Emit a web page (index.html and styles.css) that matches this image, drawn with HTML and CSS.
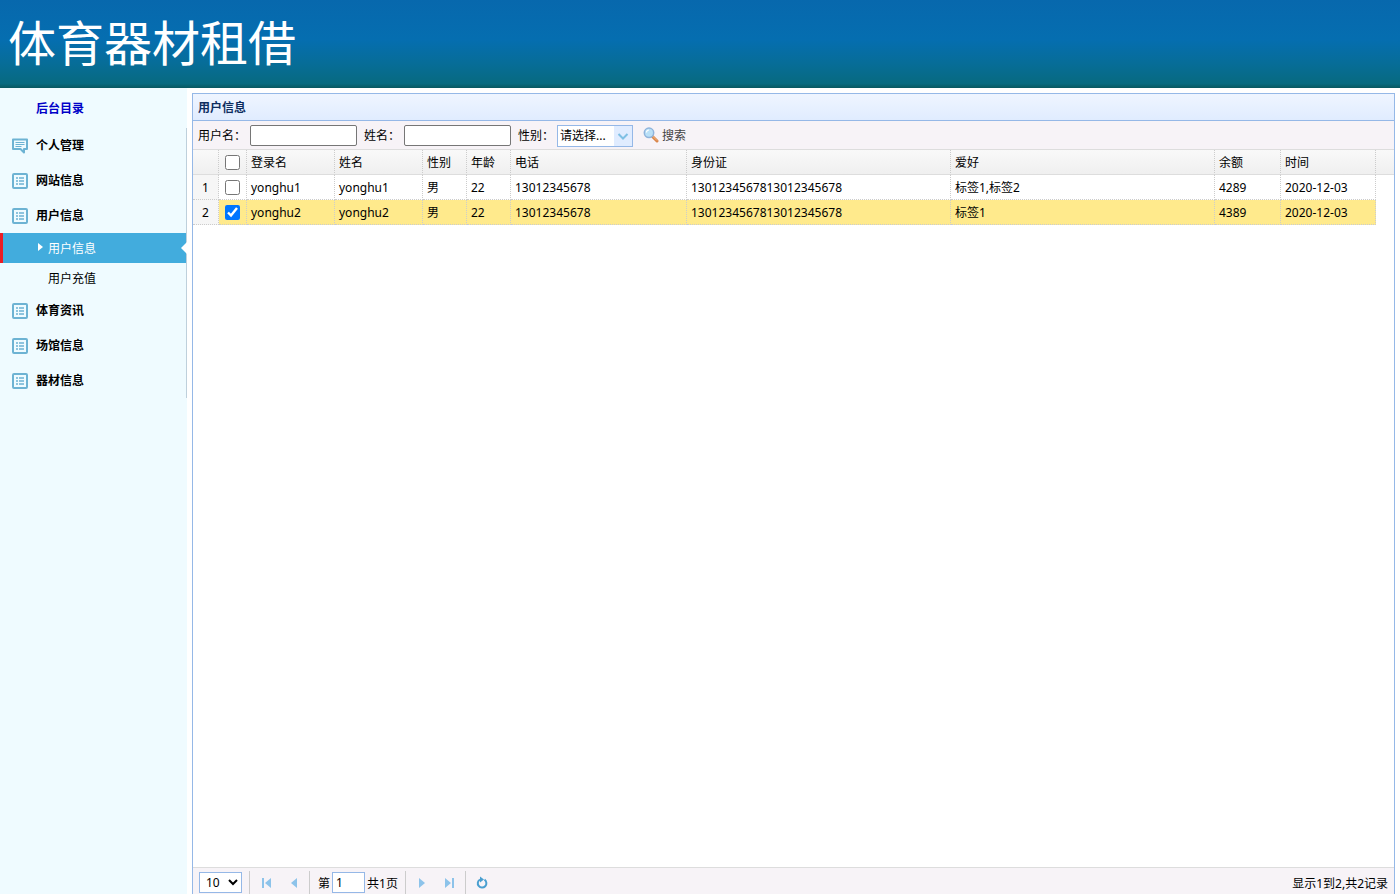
FILE: index.html
```html
<!DOCTYPE html>
<html lang="zh-CN">
<head>
<meta charset="utf-8">
<title>体育器材租借</title>
<link rel="stylesheet" href="styles.css">
</head>
<body>
<svg class="sprites" aria-hidden="true">
  <symbol id="list" viewBox="0 0 16 16"><rect x="1" y="1" width="14" height="14" rx="1" fill="none" stroke="#6db3d3" stroke-width="2"/><path d="M4 5h2M7 5h5M4 8h2M7 8h5M4 11h2M7 11h5" stroke="#6db3d3" stroke-width="1.6"/></symbol>
  <symbol id="chat" viewBox="0 0 16 16"><path d="M1 1.500h14v9.500h-3v3.500l-3.500-3.500H1z" fill="none" stroke="#6db3d3" stroke-width="2" stroke-linejoin="round"/><path d="M3.500 4.500h9M3.500 6.500h9M3.500 8.500h6" stroke="#6db3d3" stroke-width="1"/></symbol>
</svg>
<header class="banner"><h1 class="banner-title">体育器材租借</h1></header>
<div class="shell">
  <nav class="sidebar">
    <a class="home" href="#">后台目录</a>
    <div class="menu">
      <a class="item" href="#"><svg class="item-icon"><use href="#chat"/></svg><span class="item-text">个人管理</span></a>
      <a class="item" href="#"><svg class="item-icon"><use href="#list"/></svg><span class="item-text">网站信息</span></a>
      <a class="item" href="#"><svg class="item-icon"><use href="#list"/></svg><span class="item-text">用户信息</span></a>
      <a class="sub active" href="#"><svg class="caret" viewBox="0 0 5 8"><path d="M0 0l5 4-5 4z" fill="#fff"/></svg>用户信息<svg class="notch" viewBox="0 0 6 12"><path d="M6 0v12L0 6z" fill="#fff"/></svg></a>
      <a class="sub" href="#">用户充值</a>
      <a class="item" href="#"><svg class="item-icon"><use href="#list"/></svg><span class="item-text">体育资讯</span></a>
      <a class="item" href="#"><svg class="item-icon"><use href="#list"/></svg><span class="item-text">场馆信息</span></a>
      <a class="item" href="#"><svg class="item-icon"><use href="#list"/></svg><span class="item-text">器材信息</span></a>
    </div>
  </nav>
  <main class="panel">
    <h2 class="panel-title">用户信息</h2>
    <form class="toolbar">
      <div class="field"><label class="caption" for="f-user">用户名<span class="colon">：</span></label><input class="text" id="f-user" type="text"></div>
      <div class="field"><label class="caption" for="f-name">姓名<span class="colon">：</span></label><input class="text" id="f-name" type="text"></div>
      <div class="field tight"><label class="caption" for="f-sex">性别<span class="colon">：</span></label><span class="combo"><select class="combo-select" id="f-sex"><option>请选择...</option><option>男</option><option>女</option></select><svg class="combo-arrow" viewBox="0 0 18 20"><path d="M4.500 8l4.500 4.500L13.500 8" fill="none" stroke="#7fc0e4" stroke-width="2"/></svg></span></div>
      <button class="search" type="button"><svg class="search-icon" viewBox="0 0 16 16"><path d="M9.500 9.500l4.500 4.500" stroke="#d9854a" stroke-width="3" stroke-linecap="round"/><path d="M9.500 9l4.500 4.500" stroke="#f6bd82" stroke-width="1"/><circle cx="6" cy="5.800" r="4.700" fill="#b9e0f7" stroke="#8fb4dc" stroke-width="1.500"/><path d="M3.500 5.500a2.500 2.500 0 0 1 2.500-2.500" fill="none" stroke="#fff" stroke-width="1.200"/></svg><span class="caption">搜索</span></button>
    </form>
    <div class="grid-wrap">
    <table class="grid">
      <colgroup><col class="c-num"><col class="c-check"><col class="c-name"><col class="c-name"><col class="c-short"><col class="c-short"><col class="c-phone"><col class="c-long"><col class="c-long"><col class="c-money"><col class="c-date"><col></colgroup>
      <thead><tr><th></th><th class="check"><input class="tick" type="checkbox" aria-label="全选"></th><th>登录名</th><th>姓名</th><th>性别</th><th>年龄</th><th>电话</th><th>身份证</th><th>爱好</th><th>余额</th><th>时间</th><th class="rest"></th></tr></thead>
      <tbody>
        <tr><td class="num">1</td><td class="check"><input class="tick" type="checkbox" aria-label="选择第1行"></td><td>yonghu1</td><td>yonghu1</td><td>男</td><td>22</td><td>13012345678</td><td>1301234567813012345678</td><td>标签1,标签2</td><td>4289</td><td>2020-12-03</td><td class="rest"></td></tr>
        <tr class="selected"><td class="num">2</td><td class="check"><input class="tick" type="checkbox" aria-label="选择第2行" checked></td><td>yonghu2</td><td>yonghu2</td><td>男</td><td>22</td><td>13012345678</td><td>1301234567813012345678</td><td>标签1</td><td>4389</td><td>2020-12-03</td><td class="rest"></td></tr>
      </tbody>
    </table>
    </div>
    <footer class="pager">
      <select class="size" aria-label="每页条数"><option>10</option><option>20</option></select>
      <span class="sep"></span>
      <button class="page-btn" type="button" aria-label="首页"><svg class="page-icon" viewBox="0 0 16 16"><path d="M4 3h2v10H4zM13 3v10L7 8z" fill="#8dc3ea"/></svg></button>
      <button class="page-btn" type="button" aria-label="上一页"><svg class="page-icon" viewBox="0 0 16 16"><path d="M11 3v10L5 8z" fill="#8dc3ea"/></svg></button>
      <span class="sep"></span>
      <label class="page-label"><span class="caption">第</span><input class="page-input" type="text" value="1"><span class="caption">共1页</span></label>
      <span class="sep"></span>
      <button class="page-btn" type="button" aria-label="下一页"><svg class="page-icon" viewBox="0 0 16 16"><path d="M5 3v10l6-5z" fill="#8dc3ea"/></svg></button>
      <button class="page-btn" type="button" aria-label="末页"><svg class="page-icon" viewBox="0 0 16 16"><path d="M10 3h2v10h-2zM3 3v10l6-5z" fill="#8dc3ea"/></svg></button>
      <span class="sep"></span>
      <button class="page-btn" type="button" aria-label="刷新"><svg class="page-icon" viewBox="0 0 16 16"><path d="M10.500 4.700A4.300 4.300 0 1 1 6 4.500" fill="none" stroke="#4a9fd0" stroke-width="2"/><path d="M6 1.500v6l4-3z" fill="#4a9fd0"/></svg></button>
      <span class="summary caption">显示1到2,共2记录</span>
    </footer>
  </main>
</div>
</body>
</html>
```
FILE: styles.css
```css
* { box-sizing: border-box; }
body {
  margin: 0;
  height: 100vh;
  display: flex;
  flex-direction: column;
  overflow: hidden;
  background: #fff;
  color: #000;
  font: 12px/16px "Noto Sans", "Noto Sans CJK SC", sans-serif;
}
input, select, button { font: inherit; color: inherit; margin: 0; }
a { text-decoration: none; color: inherit; }
.sprites { display: none; }

.banner {
  flex: none;
  height: 88px;
  padding: 8px;
  background: linear-gradient(#0768ad 0%, #056eb0 45%, #076d98 72%, #076a80 95%, #085860 100%);
}
.banner-title {
  margin: 0;
  color: #fff;
  font-family: "Noto Sans CJK SC", sans-serif;
  font-size: 48px;
  font-weight: 400;
  line-height: 64px;
}

.shell { flex: 1; min-height: 0; display: flex; }
.sidebar { flex: none; width: 187px; background: #effbff; }
.home {
  display: block;
  height: 40px;
  padding-left: 36px;
  color: #0000c8;
  font-weight: 700;
  line-height: 40px;
}
.menu { border-right: 1px solid #bed0dc; }
.item {
  display: flex;
  align-items: center;
  gap: 8px;
  height: 35px;
  padding-left: 12px;
  font-weight: 700;
}
.home, .item { font-family: "Noto Sans CJK SC", sans-serif; }
.item-icon { width: 16px; height: 16px; }
.item-text { padding-bottom: 2px; }
.sub {
  position: relative;
  display: block;
  height: 30px;
  padding-left: 48px;
  line-height: 32px;
}
.active { background: #42acdd; color: #fff; border-left: 3px solid #ec1c24; padding-left: 45px; }
.caret { position: absolute; left: 35px; top: 10px; width: 5px; height: 8px; }
.notch { position: absolute; right: -1px; top: 9px; width: 6px; height: 12px; }

.panel {
  flex: 1;
  min-width: 0;
  display: flex;
  flex-direction: column;
  margin: 5px 5px 0;
  border: 1px solid #95b8e7;
  border-bottom: 0;
}
.panel-title {
  margin: 0;
  height: 27px;
  padding: 0 5px;
  border-bottom: 1px solid #95b8e7;
  background: linear-gradient(#eff5ff, #e0ecff);
  color: #0e2d5f;
  font-size: 12px;
  font-weight: 700;
  line-height: 28px;
}
.toolbar {
  display: flex;
  align-items: center;
  gap: 7px;
  height: 29px;
  padding: 0 5px;
  border-bottom: 1px solid #ddd;
  background: #f7f3f7;
}
.caption { padding-top: 2px; }
.colon { font-family: "Noto Sans CJK TC", sans-serif; line-height: 1; }
.field { display: flex; align-items: center; gap: 4px; }
.tight { gap: 3px; }
.text {
  width: 107px;
  height: 21px;
  padding: 1px 2px;
  border: 1px solid #767676;
  border-radius: 2px;
  background: #fff;
}
.combo { position: relative; display: flex; padding-top: 2px; }
.combo-select {
  appearance: none;
  width: 76px;
  height: 22px;
  padding: 0 18px 0 2px;
  border: 1px solid #95b8e7;
  border-radius: 0;
  background: #fff;
}
.combo-arrow {
  position: absolute;
  right: 1px;
  bottom: 1px;
  width: 18px;
  height: 20px;
  background: #e0ecff;
  pointer-events: none;
}
.search {
  display: flex;
  align-items: center;
  gap: 3px;
  padding: 0 3px;
  border: 0;
  background: none;
  color: #444;
}
.search-icon { width: 16px; height: 16px; }

.grid-wrap { flex: 1; min-height: 0; overflow: hidden; }
.grid { width: 100%; table-layout: fixed; border-spacing: 0; }
.c-num { width: 26px; }
.c-check { width: 28px; }
.c-name { width: 88px; }
.c-short { width: 44px; }
.c-phone { width: 176px; }
.c-long { width: 264px; }
.c-money { width: 66px; }
.c-date { width: 95px; }
.grid th, .grid td {
  height: 25px;
  padding: 2px 4px 0;
  border: 0 dotted #ccc;
  border-width: 0 1px 1px 0;
  font-weight: 400;
  text-align: left;
  white-space: nowrap;
}
.grid thead { background: linear-gradient(#f9f9f9, #efefef); }
.grid th { border-bottom: 1px solid #ddd; }
.grid .num { padding: 2px 0 0; text-align: center; background: #f6f6f6; }
.grid .check { padding: 0; text-align: center; }
.grid .rest { border-right: 0; }
.grid td.rest { border-bottom: 0; background: #fff; }
.selected { background: #ffea8c; }
.tick { display: block; width: 15px; height: 15px; margin: 0 auto; }

.pager {
  flex: none;
  display: flex;
  align-items: center;
  height: 27px;
  padding: 3px 6px 0;
  border-top: 1px solid #ddd;
  background: #f7f3f7;
}
.size { width: 43px; height: 21px; margin-right: 6px; padding: 0 0 0 2px; border: 1px solid #95b8e7; border-radius: 0; background: #fff; }
.sep { width: 1px; height: 24px; margin: 0 2px 0 1px; background: #ccc; }
.page-btn { display: flex; width: 28px; height: 22px; padding: 3px 6px; border: 0; background: none; }
.page-icon { width: 16px; height: 16px; }
.page-label { display: flex; align-items: center; gap: 2px; margin: 0 6px; }
.page-input { width: 33px; height: 21px; padding: 0 3px; border: 1px solid #95b8e7; background: #fff; }
.summary { margin-left: auto; }
```
